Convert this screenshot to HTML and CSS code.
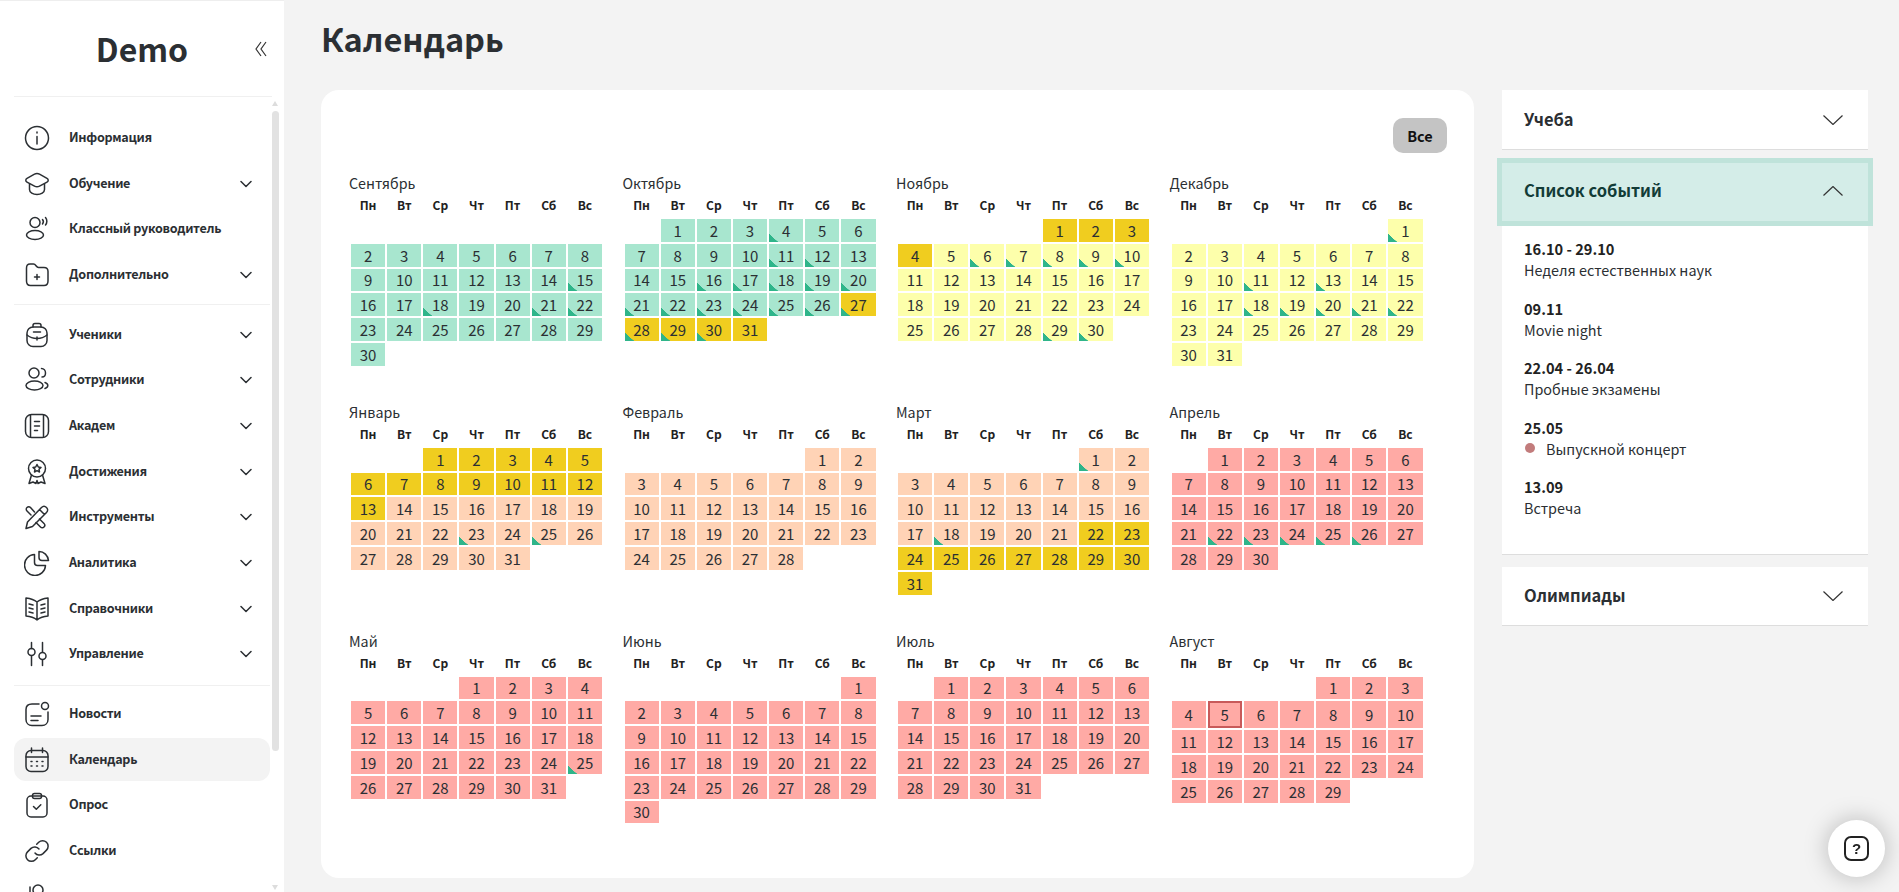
FILE: index.html
```html
<!DOCTYPE html>
<html lang="ru">
<head>
    <meta charset="UTF-8">
    <meta name="viewport" content="width=device-width, initial-scale=1.0">
    <title>Календарь</title>
    <link rel="stylesheet" href="styles.css">
</head>
<body>
    <aside class="sidebar">
        <div class="brand">
            <span class="brand-name">Demo</span>
            <svg class="collapse" viewBox="0 0 12 16"><path d="M6 1L1 8l5 7M11 1L6 8l5 7"/></svg>
        </div>
        <nav class="nav">
            <ul class="nav-group">
                <li class="nav-item">
                    <svg class="nav-icon" viewBox="0 0 26 26"><circle cx="13" cy="13" r="11.5"/><path d="M13 11.5V19M13 7v1"/></svg>
                    <span>Информация</span>
                </li>
                <li class="nav-item">
                    <svg class="nav-icon" viewBox="0 0 26 26"><path d="M10.5 3.2L3 7.3c-1.6.9-1.6 2.9 0 3.8l7.5 4.1c1.5.8 3.5.8 5 0l7.5-4.1c1.6-.9 1.6-2.9 0-3.8l-7.5-4.1c-1.5-.8-3.500-.8-5 0z"/><path d="M5.500 13v5.500c0 3 3.500 5 7.500 5s7.500-2 7.500-5V13"/></svg>
                    <span>Обучение</span>
                    <svg class="nav-arrow" viewBox="0 0 12 8"><path d="M1 1.500l5 5 5-5"/></svg>
                </li>
                <li class="nav-item">
                    <svg class="nav-icon" viewBox="0 0 26 26"><circle cx="11" cy="6.500" r="5"/><ellipse cx="11" cy="19" rx="8.500" ry="4.500"/><path d="M18.500 3.500c1 1.200 1 3.200 0 4.500M21.500 1.500c1.800 2 1.800 5.500 0 7.500"/></svg>
                    <span>Классный руководитель</span>
                </li>
                <li class="nav-item">
                    <svg class="nav-icon" viewBox="0 0 26 26"><path d="M2.500 19V6c0-2.500 1.500-4 3.500-4h3.500c2.500 0 2.500 3.500 5 3.500H20c2.500 0 4 1.500 4 4V19c0 3-1.500 4.500-4 4.500H6.500c-2.500 0-4-1.500-4-4.500z"/><path d="M13 12.500v5M10.500 15h5"/></svg>
                    <span>Дополнительно</span>
                    <svg class="nav-arrow" viewBox="0 0 12 8"><path d="M1 1.500l5 5 5-5"/></svg>
                </li>
            </ul>
            <ul class="nav-group">
                <li class="nav-item">
                    <svg class="nav-icon" viewBox="0 0 26 26"><rect x="3" y="5" width="20" height="19.500" rx="6"/><path d="M9 5V3.500C9 2.300 10 1.500 11 1.500h4c1 0 2 .8 2 2V5M3 13c3 2.500 6.500 3.500 10 3.500s7-1 10-3.500M13 15v3M9.500 10h7"/></svg>
                    <span>Ученики</span>
                    <svg class="nav-arrow" viewBox="0 0 12 8"><path d="M1 1.500l5 5 5-5"/></svg>
                </li>
                <li class="nav-item">
                    <svg class="nav-icon" viewBox="0 0 26 26"><circle cx="10" cy="6" r="5"/><ellipse cx="10.500" cy="18.500" rx="8.500" ry="4.500"/><path d="M17.500 1.500c2.300 0 4 2 4 4.500s-1.700 4-3.500 4M21 15.500c1.800.6 2.800 1.700 2.800 3s-1 2.400-2.800 3"/></svg>
                    <span>Сотрудники</span>
                    <svg class="nav-arrow" viewBox="0 0 12 8"><path d="M1 1.500l5 5 5-5"/></svg>
                </li>
                <li class="nav-item">
                    <svg class="nav-icon" viewBox="0 0 26 26"><rect x="1.500" y="1.500" width="23" height="23" rx="6"/><path d="M6.500 2v22M19.500 2v22M10.500 8.500h5M10.500 13h5M10.500 17.500h3"/></svg>
                    <span>Академ</span>
                    <svg class="nav-arrow" viewBox="0 0 12 8"><path d="M1 1.500l5 5 5-5"/></svg>
                </li>
                <li class="nav-item">
                    <svg class="nav-icon" viewBox="0 0 26 26"><circle cx="13" cy="9.500" r="8.500"/><path d="M13 5.500l1.300 2.500 2.700.4-2 1.900.5 2.700-2.500-1.300-2.500 1.300.5-2.700-2-1.900 2.700-.4zM7.500 16l-2.500 8.500 4-1.500 3 1.500 1-3 1 3 3-1.500 4 1.500-2.500-8.500"/></svg>
                    <span>Достижения</span>
                    <svg class="nav-arrow" viewBox="0 0 12 8"><path d="M1 1.500l5 5 5-5"/></svg>
                </li>
                <li class="nav-item">
                    <svg class="nav-icon" viewBox="0 0 26 26"><path d="M2 24.500l1.500-6.500L17.500 3.500c1.500-1.500 3.500-1.500 5 0s1.500 3.500 0 5L8.500 22.500zM15.500 5.500l5 5"/><path d="M10.500 8L6.500 3.500c-1-1-2.500-1-3.500 0s-1 2.500 0 3.500L7 11M15.500 15l4.500 4.500c1 1 1 2.500 0 3.500s-2.500 1-3.500 0L12 18.500"/></svg>
                    <span>Инструменты</span>
                    <svg class="nav-arrow" viewBox="0 0 12 8"><path d="M1 1.500l5 5 5-5"/></svg>
                </li>
                <li class="nav-item">
                    <svg class="nav-icon" viewBox="0 0 26 26"><path d="M10.500 4.500a10.500 10.500 0 1 0 11 11h-8c-1.800 0-3-1.200-3-3z"/><path d="M15 1.500c5 0 9 4 9.500 9H18c-1.800 0-3-1.200-3-3z"/></svg>
                    <span>Аналитика</span>
                    <svg class="nav-arrow" viewBox="0 0 12 8"><path d="M1 1.500l5 5 5-5"/></svg>
                </li>
                <li class="nav-item">
                    <svg class="nav-icon" viewBox="0 0 26 26"><path d="M13 6C10 3.500 6 2.500 2 2V20c4 .3 8 1.500 11 4 3-2.500 7-3.700 11-4V2c-4 .5-8 1.500-11 4zM13 6v18M5 8l4 1M5 12l4 1M5 16l4 1M21 8l-4 1M21 12l-4 1M21 16l-4 1"/></svg>
                    <span>Справочники</span>
                    <svg class="nav-arrow" viewBox="0 0 12 8"><path d="M1 1.500l5 5 5-5"/></svg>
                </li>
                <li class="nav-item">
                    <svg class="nav-icon" viewBox="0 0 26 26"><circle cx="7.500" cy="11" r="3.500"/><circle cx="18.500" cy="15" r="3.500"/><path d="M7.500 1.500v6M7.500 15v9.500M18.500 1.500V11M18.500 19v5.500"/></svg>
                    <span>Управление</span>
                    <svg class="nav-arrow" viewBox="0 0 12 8"><path d="M1 1.500l5 5 5-5"/></svg>
                </li>
            </ul>
            <ul class="nav-group">
                <li class="nav-item">
                    <svg class="nav-icon" viewBox="0 0 26 26"><path d="M15 3H8C4.500 3 2 5 2 8.500v10C2 22 4.500 24.500 8 24.500h10c3.500 0 6-2.500 6-6V11"/><circle cx="21" cy="5" r="3.500"/><path d="M7 15h10M7 19.500h7"/></svg>
                    <span>Новости</span>
                </li>
                <li class="nav-item is-active">
                    <svg class="nav-icon" viewBox="0 0 26 26"><rect x="2" y="3.500" width="22" height="21" rx="5"/><path d="M2 10h22M7.500 1v4.500M18.500 1v4.500M7 14.500h1M12.500 14.500h1M18 14.500h1M7 19h1M12.500 19h1M18 19h1"/></svg>
                    <span>Календарь</span>
                </li>
                <li class="nav-item">
                    <svg class="nav-icon" viewBox="0 0 26 26"><rect x="3" y="4" width="20" height="21" rx="4"/><rect x="8.500" y="1.500" width="9" height="5" rx="2"/><path d="M9.500 14.500l2.800 2.800 4.500-4.500"/></svg>
                    <span>Опрос</span>
                </li>
                <li class="nav-item">
                    <svg class="nav-icon" viewBox="0 0 26 26"><path d="M11 15a5.500 5.500 0 0 0 8 .6l3.500-3.500a5.500 5.500 0 0 0-7.800-7.800l-2 2"/><path d="M15 11a5.500 5.500 0 0 0-8-.6l-3.500 3.500a5.500 5.500 0 0 0 7.800 7.800l2-2"/></svg>
                    <span>Ссылки</span>
                </li>
                <li class="nav-item" aria-label="Профиль">
                    <svg class="nav-icon" viewBox="0 0 26 26"><circle cx="14" cy="6" r="5"/><path d="M6 3v5"/></svg>
                </li>
            </ul>
            <div class="nav-scroll">
                <span class="scroll-up"></span>
                <span class="scroll-thumb"></span>
                <span class="scroll-down"></span>
            </div>
        </nav>
    </aside>

    <main class="main">
        <h1 class="page-title">Календарь</h1>
        <div class="content">
            <section class="card">
                <div class="card-top">
                    <button class="btn-all" type="button">Все</button>
                </div>
                <div class="year" id="year"></div>
            </section>

            <aside class="panels">
                <div class="panel panel-first">
                    <div class="panel-head">
                        <span>Учеба</span>
                        <svg class="panel-arrow" viewBox="0 0 20 10"><path d="M.5.500L10 9.500 19.500.500"/></svg>
                    </div>
                </div>
                <div class="panel is-open">
                    <div class="panel-head">
                        <span>Список событий</span>
                        <svg class="panel-arrow" viewBox="0 0 20 10"><path d="M.5 9.500L10 .500l9.500 9"/></svg>
                    </div>
                    <div class="panel-body">
                        <div class="event">
                            <div class="event-date">16.10 - 29.10</div>
                            <div class="event-text">Неделя естественных наук</div>
                        </div>
                        <div class="event">
                            <div class="event-date">09.11</div>
                            <div class="event-text">Movie night</div>
                        </div>
                        <div class="event">
                            <div class="event-date">22.04 - 26.04</div>
                            <div class="event-text">Пробные экзамены</div>
                        </div>
                        <div class="event">
                            <div class="event-date">25.05</div>
                            <div class="event-text"><span class="event-dot"></span>Выпускной концерт</div>
                        </div>
                        <div class="event">
                            <div class="event-date">13.09</div>
                            <div class="event-text">Встреча</div>
                        </div>
                    </div>
                </div>
                <div class="panel">
                    <div class="panel-head">
                        <span>Олимпиады</span>
                        <svg class="panel-arrow" viewBox="0 0 20 10"><path d="M.5.500L10 9.500 19.500.500"/></svg>
                    </div>
                </div>
            </aside>
        </div>
    </main>

    <button class="help" type="button" aria-label="Помощь">
        <span class="help-box">?</span>
    </button>

    <script src="calendar.js"></script>
</body>
</html>
```

FILE: styles.css
```css
/* Basic reset and body styling */
* {
    box-sizing: border-box;
    margin: 0;
    padding: 0;
}

body {
    font-family: "Noto Sans CJK SC", "Noto Sans", sans-serif;
    background: #f3f3f3;
    color: #2b2f33;
    display: flex;
    height: 892px;
    overflow: hidden;
}

ul {
    list-style: none;
}

/* Sidebar */
.sidebar {
    width: 284px;
    flex-shrink: 0;
    height: 100%;
    background: white;
    border-top: 1px solid #eeeeee;
    display: flex;
    flex-direction: column;
}

.brand {
    height: 96px;
    margin: 0 12px 0 14px;
    border-bottom: 1px solid #f0f0f0;
    position: relative;
    display: flex;
    align-items: center;
    justify-content: center;
    padding: 0 2px 2px 0;
}

.brand-name {
    font-size: 32px;
    font-weight: 700;
    line-height: 1;
    color: #2b2f33;
}

.collapse {
    position: absolute;
    right: 5px;
    top: 40px;
    width: 12px;
    height: 16px;
    fill: none;
    stroke: #333333;
    stroke-width: 1.200;
}

.nav {
    flex: 1;
    position: relative;
    overflow: hidden;
    padding: 18px 14px 0;
}

.nav-group {
    border-bottom: 1px solid #f0f0f0;
    padding-bottom: 8px;
    margin-bottom: 5px;
    width: 256px;
}

.nav-group:first-child {
    padding-bottom: 6px;
    margin-bottom: 7px;
}

.nav-group:last-of-type {
    border-bottom: none;
}

.nav-item {
    height: 45.700px;
    padding: 0 18px 0 10px;
    display: flex;
    align-items: center;
    gap: 19px;
    font-size: 12.600px;
    letter-spacing: -0.300px;
    font-weight: 700;
    white-space: nowrap;
    border-radius: 12px;
}

.nav-item span {
    padding-bottom: 3px;
}

.nav-item.is-active {
    background: #f3f3f3;
    height: 43px;
    margin: 1.350px 0;
}

.nav-icon {
    width: 26px;
    height: 26px;
    flex-shrink: 0;
    fill: none;
    stroke: #2b2f33;
    stroke-width: 1.500;
    stroke-linecap: round;
    stroke-linejoin: round;
}

.nav-arrow {
    width: 12px;
    height: 8px;
    margin-left: auto;
    fill: none;
    stroke: #2b2f33;
    stroke-width: 1.500;
    stroke-linecap: round;
    stroke-linejoin: round;
}

/* Drawn scrollbar, it sits over the nav list */
.nav-scroll {
    position: absolute;
    top: 0;
    right: 5px;
    bottom: 0;
    width: 7px;
}

.scroll-up,
.scroll-down {
    position: absolute;
    left: 0;
    width: 0;
    height: 0;
    border-left: 3.500px solid transparent;
    border-right: 3.500px solid transparent;
}

.scroll-up {
    top: 4px;
    border-bottom: 5px solid #dddddd;
}

.scroll-down {
    bottom: 2px;
    border-top: 5px solid #dddddd;
}

.scroll-thumb {
    position: absolute;
    top: 14px;
    left: 0;
    width: 7px;
    height: 640px;
    background: #e2e2e2;
    border-radius: 4px;
}

/* Main area */
.main {
    flex: 1;
    min-width: 0;
    padding: 0 31px 0 37px;
}

.page-title {
    height: 90px;
    padding-top: 18px;
    font-size: 32.500px;
    line-height: 40px;
    font-weight: 700;
    color: #2b2f33;
}

.content {
    display: flex;
    gap: 28px;
    align-items: flex-start;
}

/* Calendar card */
.card {
    width: 1153px;
    height: 788px;
    flex-shrink: 0;
    background: white;
    border-radius: 18px;
    padding: 28px 27px 0 28px;
}

.card-top {
    display: flex;
    justify-content: flex-end;
    margin-bottom: 20px;
}

.btn-all {
    width: 54px;
    height: 35px;
    background-color: #c4c4c4;
    color: #111111;
    border: none;
    border-radius: 10px;
    font-family: inherit;
    font-size: 14.500px;
    font-weight: 700;
}

.year {
    display: grid;
    grid-template-columns: repeat(4, 273.500px);
    row-gap: 34px;
}

.month-name {
    font-size: 14.300px;
    line-height: 20px;
    color: #2b2f33;
}

.month {
    width: 255px;
    table-layout: fixed;
    border-collapse: separate;
    border-spacing: 2px;
}

.month th {
    height: 22px;
    padding-bottom: 3px;
    font-size: 12px;
    font-weight: 700;
    color: #222222;
    text-align: center;
}

.month td {
    position: relative;
    height: 22.800px;
    padding: 0;
    font-size: 15px;
    line-height: 1;
    text-align: center;
    color: #2b2f33;
}

.day-green { background: #a8e6cf; }
.day-gold { background: #f0cd1f; }
.day-yellow { background: #fdffab; }
.day-peach { background: #ffd3b6; }
.day-pink { background: #ffaaa5; }

.day-mark::after {
    content: "";
    position: absolute;
    left: 0;
    bottom: 0;
    width: 9px;
    height: 8px;
    background: linear-gradient(to top right, #2fb58a 50%, transparent 52%);
}

.month td.day-today {
    height: 27px;
    border: 2px solid #c85a5a;
}

/* Right column */
.panels {
    width: 366px;
    flex-shrink: 0;
    display: flex;
    flex-direction: column;
    gap: 13px;
}

.panel-head {
    height: 59px;
    padding: 0 25px 0 22px;
    background: white;
    border-bottom: 1px solid #dddddd;
    display: flex;
    align-items: center;
    justify-content: space-between;
    font-size: 16.500px;
    font-weight: 700;
    color: #2b2f33;
}

.panel-head span {
    padding-bottom: 2px;
    white-space: nowrap;
}

.panel-arrow {
    width: 20px;
    height: 10px;
    flex-shrink: 0;
    fill: none;
    stroke: #333333;
    stroke-width: 1.200;
}

.panel-first .panel-head {
    height: 60px;
}

.is-open {
    margin-bottom: -1px;
}

.is-open .panel-head {
    height: 58px;
    padding-bottom: 2px;
    background: #d4ede8;
    border-bottom: none;
    box-shadow: 0 0 0 5px #bfe3da;
    color: #123c37;
    position: relative;
}

.panel-body {
    height: 334px;
    padding: 17px 22px 0;
    background: white;
    border-bottom: 1px solid #dddddd;
}

.event {
    margin-bottom: 17.500px;
}

.event-date {
    font-size: 14.600px;
    line-height: 21px;
    font-weight: 700;
    color: #222222;
}

.event-text {
    display: flex;
    align-items: center;
    font-size: 14.400px;
    line-height: 21px;
    color: #2b2f33;
}

.event-dot {
    width: 10px;
    height: 10px;
    border-radius: 50%;
    background: #c27c7c;
    margin: 0 11px 0 1px;
}

/* Help button */
.help {
    position: fixed;
    right: 14px;
    bottom: 15px;
    width: 57px;
    height: 57px;
    border: none;
    border-radius: 50%;
    background: white;
    box-shadow: 0 0 24px rgba(0, 0, 0, 0.25);
    display: flex;
    align-items: center;
    justify-content: center;
}

.help-box {
    width: 25px;
    height: 25px;
    border: 2px solid #222222;
    border-radius: 7px;
    font-family: inherit;
    font-size: 15px;
    font-weight: 700;
    line-height: 21px;
    text-align: center;
    color: #222222;
}
```

FILE: calendar.js
```js
const WEEKDAYS = ['Пн', 'Вт', 'Ср', 'Чт', 'Пт', 'Сб', 'Вс'];

// offset: empty cells before the first shown day; colors: [last day, class] ranges
const MONTHS = [
    { name: 'Сентябрь', offset: 7, first: 2, last: 30, colors: [[30, 'green']], marks: [15, 18, 21, 22] },
    { name: 'Октябрь', offset: 1, first: 1, last: 31, colors: [[26, 'green'], [31, 'gold']], marks: [4, 11, 12, 16, 17, 18, 19, 20, 21, 22, 23, 24, 25, 26, 27, 28, 29, 30] },
    { name: 'Ноябрь', offset: 4, first: 1, last: 30, colors: [[4, 'gold'], [30, 'yellow']], marks: [6, 7, 8, 9, 10, 29, 30] },
    { name: 'Декабрь', offset: 6, first: 1, last: 31, colors: [[31, 'yellow']], marks: [1, 11, 13, 18, 19, 20, 21, 22] },
    { name: 'Январь', offset: 2, first: 1, last: 31, colors: [[13, 'gold'], [31, 'peach']], marks: [23, 25] },
    { name: 'Февраль', offset: 5, first: 1, last: 28, colors: [[28, 'peach']], marks: [] },
    { name: 'Март', offset: 5, first: 1, last: 31, colors: [[21, 'peach'], [31, 'gold']], marks: [1, 18] },
    { name: 'Апрель', offset: 1, first: 1, last: 30, colors: [[30, 'pink']], marks: [22, 23, 24, 25, 26] },
    { name: 'Май', offset: 3, first: 1, last: 31, colors: [[31, 'pink']], marks: [25] },
    { name: 'Июнь', offset: 6, first: 1, last: 30, colors: [[30, 'pink']], marks: [] },
    { name: 'Июль', offset: 1, first: 1, last: 31, colors: [[31, 'pink']], marks: [] },
    { name: 'Август', offset: 4, first: 1, last: 29, colors: [[29, 'pink']], marks: [], today: 5 }
];

function dayClass(month, day) {
    const color = month.colors.find(range => day <= range[0])[1];
    let cls = 'day-' + color;
    if (month.marks.includes(day)) cls += ' day-mark';
    if (month.today === day) cls += ' day-today';
    return cls;
}

function renderMonth(month) {
    let cells = '';
    for (let i = 0; i < month.offset; i++) {
        cells += '<td></td>';
        if ((i + 1) % 7 === 0) cells += '</tr><tr>';
    }
    let pos = month.offset;
    for (let day = month.first; day <= month.last; day++) {
        cells += `<td class="${dayClass(month, day)}">${day}</td>`;
        pos++;
        if (pos % 7 === 0 && day < month.last) cells += '</tr><tr>';
    }
    while (pos % 7 !== 0) {
        cells += '<td></td>';
        pos++;
    }
    const head = WEEKDAYS.map(name => `<th>${name}</th>`).join('');
    return `
        <div>
            <div class="month-name">${month.name}</div>
            <table class="month">
                <thead><tr>${head}</tr></thead>
                <tbody><tr>${cells}</tr></tbody>
            </table>
        </div>`;
}

document.getElementById('year').innerHTML = MONTHS.map(renderMonth).join('');
```
